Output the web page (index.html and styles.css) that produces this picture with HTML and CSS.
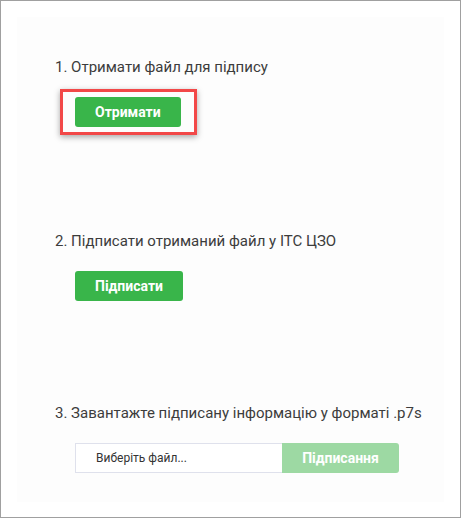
FILE: index.html
```html
<!DOCTYPE html>
<html lang="uk">
<head>
    <meta charset="UTF-8">
    <meta name="viewport" content="width=device-width, initial-scale=1.0">
    <title>Підписання файлу</title>
    <link rel="stylesheet" href="styles.css">
</head>
<body>
    <div class="frame">
        <div class="panel">
            <div class="step">
                <p class="step-title">1. Отримати файл для підпису</p>
                <div class="step-action">
                    <div class="highlight">
                        <button class="btn">Отримати</button>
                    </div>
                </div>
            </div>

            <div class="step">
                <p class="step-title">2. Підписати отриманий файл у ІТС ЦЗО</p>
                <div class="step-action">
                    <button class="btn">Підписати</button>
                </div>
            </div>

            <div class="step">
                <p class="step-title">3. Завантажте підписану інформацію у форматі .p7s</p>
                <div class="step-action">
                    <div class="file-group">
                        <label class="file-input">Виберіть файл...</label>
                        <button class="btn btn-disabled" disabled>Підписання</button>
                    </div>
                </div>
            </div>
        </div>
    </div>
</body>
</html>
```

FILE: styles.css
```css
body {
    margin: 0;
    padding: 0;
    background-color: #fff;
    font-family: Roboto, "Liberation Sans", sans-serif;
}

.frame {
    width: 461px;
    height: 518px;
    box-sizing: border-box;
    border: 1px solid #a0a0a0;
    padding: 16px;
}

.panel {
    height: 485px;
    box-sizing: border-box;
    background-color: #fdfdfd;
    padding: 40px 0 0 38px;
}

.step + .step {
    margin-top: 104px;
}

.step:last-child {
    margin-top: 102px;
}

.step-title {
    margin: 0 0 20px;
    font-size: 15px;
    line-height: 20px;
    color: #3c3c3c;
}

.step-action {
    padding-left: 20px;
    display: flex;
}

.highlight {
    border: 3px solid #f24848;
    padding: 5px 13px 5px 12px;
    margin: -8px 0 -8px -15px;
    box-shadow: 0 2px 6px rgba(0, 0, 0, 0.35);
}

.btn {
    display: block;
    height: 30px;
    padding: 0 20px;
    border: none;
    border-radius: 3px;
    background-color: #39b54a;
    color: #fff;
    font-family: Roboto, "Liberation Sans", sans-serif;
    font-size: 14px;
    font-weight: bold;
    cursor: pointer;
}

.btn-disabled {
    width: 117px;
    border-radius: 0 3px 3px 0;
    background-color: #9dd9a3;
    cursor: default;
}

.file-group {
    display: flex;
}

.file-input {
    width: 207px;
    height: 30px;
    box-sizing: border-box;
    border: 1px solid #dfe1ec;
    border-right: none;
    background-color: #fff;
    padding-left: 20px;
    font-size: 12px;
    line-height: 28px;
    color: #333;
}
```
